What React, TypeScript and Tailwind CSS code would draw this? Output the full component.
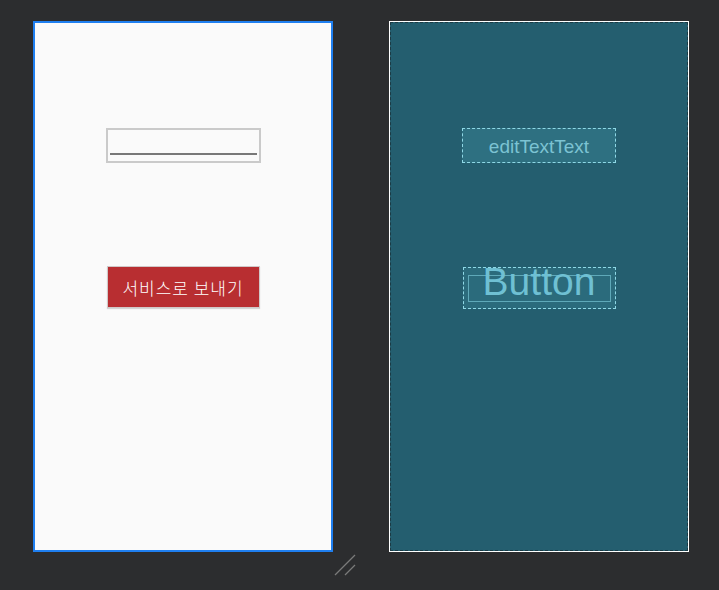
import React from 'react';

// --- Design surface (left) ---
const DesignPanel: React.FC = () => (
  <div className="w-[300px] h-[531px] border-2 border-[#1f7ff0] bg-[#fafafa] flex flex-col items-center">
    <div className="mt-[105px] w-[155px] h-[35px] border-2 border-[#cacaca] flex items-end px-[2px] pb-[6px]">
      <div className="w-full h-[2px] bg-[#787878]" />
    </div>
    <div className="mt-[103px] w-[153px] h-[42px] bg-[#b82e31] border border-[#d0c8c8] flex items-center justify-center shadow-[0_1px_1px_rgba(0,0,0,0.15)]">
      <span
        className="text-[17px] tracking-[1px] text-white leading-none"
        style={{ fontFamily: '"Noto Sans CJK KR", "Noto Sans", sans-serif', fontWeight: 300 }}
      >
        서비스로 보내기
      </span>
    </div>
  </div>
);

// --- Blueprint surface (right) ---
const BlueprintPanel: React.FC = () => (
  <div className="w-[300px] h-[531px] border border-white bg-[#245e6f] outline outline-1 outline-dashed outline-[#1b3a44] -outline-offset-2 flex flex-col items-center font-['Liberation_Sans',Arial,sans-serif]">
    <div className="mt-[106px] w-[154px] h-[35px] border border-dashed border-[#8fd8e6] bg-[#2e7081] flex items-center justify-center">
      <span className="text-[19px] text-[#7cc3d3] leading-none pt-[2px]">editTextText</span>
    </div>
    <div className="mt-[104px] w-[153px] h-[42px] border border-dashed border-[#8fd8e6] bg-[#2b6b7c] flex items-center justify-center">
      <div className="relative w-[143px] h-[27px] border border-[#5fa9b9] flex items-center justify-center">
        <span className="text-[39px] text-[#6fc0d3] leading-none -mt-[13px]">Button</span>
      </div>
    </div>
  </div>
);

export default function App() {
  return (
    <div className="relative w-[719px] h-[590px] bg-[#2c2d2f] overflow-hidden">
      <div className="flex gap-[56px] pl-[33px] pt-[21px]">
        <DesignPanel />
        <BlueprintPanel />
      </div>
      {/* resize grip */}
      <svg className="absolute left-[333px] top-[553px]" width="24" height="26" viewBox="0 0 24 26">
        <line x1="2" y1="22" x2="22" y2="2" stroke="#7a7a7a" strokeWidth="1.3" />
        <line x1="12" y1="22" x2="22" y2="12" stroke="#7a7a7a" strokeWidth="1.3" />
      </svg>
    </div>
  );
}
